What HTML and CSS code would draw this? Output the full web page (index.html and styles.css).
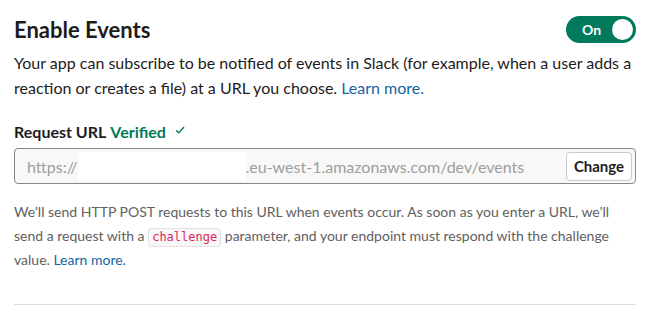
FILE: index.html
```html
<!doctype html>
<html lang="en">
  <head>
    <meta charset="UTF-8" />
    <meta name="viewport" content="width=device-width, initial-scale=1.0" />
    <title>Event Subscriptions</title>
    <link rel="stylesheet" href="styles.css">
  </head>
  <body>
    <div class="section">
      <div class="header">
        <h1>Enable Events</h1>
        <button class="toggle" aria-pressed="true">
          <span class="toggle-label">On</span>
          <span class="toggle-knob"></span>
        </button>
      </div>
      <p class="intro">
        Your app can subscribe to be notified of events in Slack (for example, when a user adds a
        reaction or creates a file) at a URL you choose. <a href="#">Learn more.</a>
      </p>

      <div class="field-label">
        Request URL <span class="verified">Verified</span>
        <svg class="check" width="10" height="8" viewBox="0 0 10 8">
          <path d="M1 4.2 L3.8 6.8 L9 1" fill="none" stroke="#007a5a" stroke-width="1.3" />
        </svg>
      </div>
      <div class="url-field">
        <span class="url-text">https://</span>
        <span class="redacted"></span>
        <span class="url-text">.eu-west-1.amazonaws.com/dev/events</span>
        <button class="change-button">Change</button>
      </div>

      <p class="help">
        We’ll send HTTP POST requests to this URL when events occur. As soon as you enter a URL, we’ll
        send a request with a <code>challenge</code> parameter, and your endpoint must respond with the challenge
        value. <a href="#">Learn more.</a>
      </p>

      <hr class="divider" />
    </div>
  </body>
</html>
```

FILE: styles.css
```css
body {
  font-family: Lato, "Open Sans", sans-serif;
  margin: 0;
  padding: 16px 18px 0 14px;
  background: white;
  color: #1d1c1d;
}
.header {
  display: flex;
  align-items: center;
  justify-content: space-between;
}
h1 {
  font-size: 22px;
  font-weight: 700;
  line-height: 27px;
  margin: 0;
}
.toggle {
  width: 70px;
  height: 27px;
  border: none;
  border-radius: 14px;
  background: #007a5a;
  padding: 0 3px 0 0;
  display: flex;
  align-items: center;
  justify-content: space-between;
  cursor: pointer;
}
.toggle-label {
  color: white;
  font-family: Lato, sans-serif;
  font-size: 14px;
  font-weight: 700;
  padding-left: 16px;
}
.toggle-knob {
  width: 21px;
  height: 21px;
  border-radius: 50%;
  background: white;
}
.intro {
  font-size: 16px;
  line-height: 25px;
  margin: 7px 0 0;
}
a {
  color: #1264a3;
  text-decoration: none;
}
.field-label {
  font-size: 16px;
  font-weight: 700;
  line-height: 24px;
  margin-top: 20px;
  display: flex;
  align-items: center;
}
.verified {
  color: #007a5a;
  margin-left: 4px;
}
.check {
  margin-left: 9px;
  margin-top: -5px;
}
.url-field {
  margin-top: 4px;
  height: 34px;
  border: 1px solid #868686;
  border-radius: 4px;
  background: #f8f8f8;
  display: flex;
  align-items: center;
  padding: 0 3px 0 12px;
  font-size: 16px;
}
.url-text {
  color: #9e9e9e;
}
.redacted {
  width: 168px;
  height: 29px;
  background: white;
}
.change-button {
  margin-left: auto;
  height: 29px;
  width: 66px;
  background: white;
  border: 1px solid #c9c9c9;
  border-radius: 4px;
  font-family: Lato, sans-serif;
  font-size: 15px;
  font-weight: 700;
  color: #1d1c1d;
  cursor: pointer;
}
.help {
  font-size: 14px;
  line-height: 24px;
  color: #616061;
  margin: 16px 0 0;
}
code {
  display: inline-block;
  font-family: Monaco, Menlo, Consolas, "DejaVu Sans Mono", monospace;
  font-size: 12px;
  line-height: 17px;
  color: #e01e5a;
  background: #f8f8f8;
  border: 1px solid #e2e2e2;
  border-radius: 3px;
  padding: 0 3px;
}
.divider {
  border: none;
  border-top: 1px solid #dddddd;
  margin: 32px 0 0;
}
```
